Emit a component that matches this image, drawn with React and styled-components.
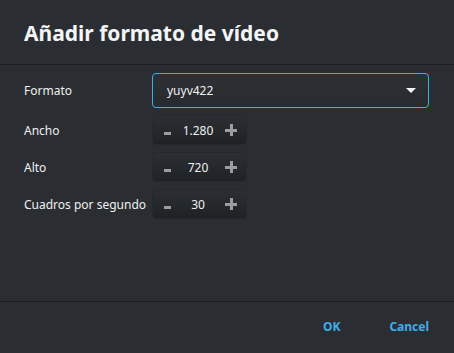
import React from "react";
import styled, { createGlobalStyle } from "styled-components";

const Global = createGlobalStyle`
  html, body { margin: 0; padding: 0; background: #2a2e32; }
  body { font-family: "Noto Sans", "Open Sans", sans-serif; color: #eff0f1; }
  * { box-sizing: border-box; }
`;

const Dialog = styled.div`
  width: 454px;
  height: 353px;
  display: flex;
  flex-direction: column;
  background: #2a2e32;
`;

const Header = styled.div`
  height: 65px;
  display: flex;
  align-items: center;
  padding: 1px 24px 0;
  border-bottom: 1px solid #1b1e20;
`;

const Title = styled.h1`
  margin: 0;
  font-size: 21px;
  font-weight: 700;
  color: #f4f5f6;
`;

const Body = styled.div`
  flex: 1;
  display: grid;
  grid-template-columns: 128px 1fr;
  grid-auto-rows: min-content;
  row-gap: 7px;
  align-items: center;
  padding: 8px 25px 0 24px;
  border-bottom: 1px solid #1b1e20;
`;

const Label = styled.span`
  font-size: 12px;
  color: #eff0f1;
`;

const Combo = styled.div`
  height: 35px;
  display: flex;
  align-items: center;
  justify-content: space-between;
  padding: 0 12px 0 14px;
  border: 1.5px solid #3daee9;
  border-radius: 4px;
  background: linear-gradient(#2d3136, #272a2e);
  font-size: 12px;
  color: #eff0f1;
`;

const Caret = styled.span`
  width: 0;
  height: 0;
  border-left: 5px solid transparent;
  border-right: 5px solid transparent;
  border-top: 5px solid #f4f5f6;
`;

const Spin = styled.div`
  width: 95px;
  height: 30px;
  display: flex;
  align-items: center;
  justify-content: space-between;
  padding: 0 9px 0 11px;
  border-radius: 4px;
  border: 1px solid #25282c;
  background: linear-gradient(#2b2f33, #1f2225);
  font-size: 12px;
  color: #eff0f1;
`;

const Minus = styled.span`
  width: 7px;
  height: 3px;
  margin-top: 6px;
  background: #9b9da0;
`;

const Plus = styled.span`
  position: relative;
  width: 12px;
  height: 12px;
  &::before, &::after {
    content: "";
    position: absolute;
    background: #9b9da0;
  }
  &::before { left: 0; top: 5px; width: 12px; height: 2.5px; }
  &::after { left: 5px; top: 0; width: 2.5px; height: 12px; }
`;

const Value = styled.span`
  flex: 1;
  text-align: center;
`;

const Footer = styled.div`
  height: 51px;
  display: flex;
  justify-content: flex-end;
  align-items: center;
  gap: 49px;
  padding: 0 25px 2px 0;
`;

const TextButton = styled.button`
  background: none;
  border: none;
  padding: 4px 0;
  font-family: inherit;
  font-size: 12px;
  font-weight: 700;
  color: #3daee9;
  cursor: pointer;
`;

const rows = [
  ["Ancho", "1.280"],
  ["Alto", "720"],
  ["Cuadros por segundo", "30"],
];

export default function App() {
  return (
    <>
      <Global />
      <Dialog>
        <Header>
          <Title>Añadir formato de vídeo</Title>
        </Header>
        <Body>
          <Label>Formato</Label>
          <Combo>
            <span>yuyv422</span>
            <Caret />
          </Combo>
          {rows.map(([label, value]) => (
            <React.Fragment key={label}>
              <Label>{label}</Label>
              <Spin>
                <Minus />
                <Value>{value}</Value>
                <Plus />
              </Spin>
            </React.Fragment>
          ))}
        </Body>
        <Footer>
          <TextButton>OK</TextButton>
          <TextButton>Cancel</TextButton>
        </Footer>
      </Dialog>
    </>
  );
}
